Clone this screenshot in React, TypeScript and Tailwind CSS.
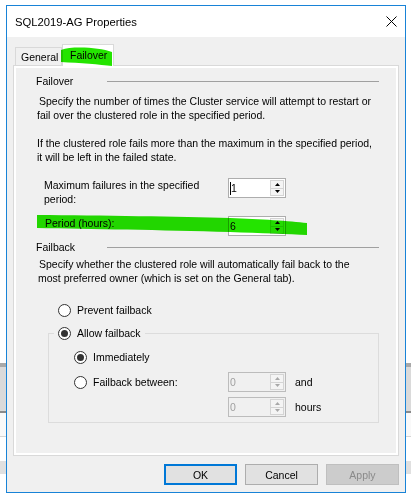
import clsx from "clsx";

function GroupHeader({ title }: { title: string }) {
    return (
        <div className="flex h-[14px] items-center">
            <span className="w-[71px]">{title}</span>
            <div className="h-px flex-1 bg-[#a0a0a0]"></div>
        </div>
    )
}

function SpinBox({ value, disabled, caret }: { value: string; disabled?: boolean; caret?: boolean }) {
    const arrow = disabled ? "#a8a8a8" : "#000";
    return (
        <div className={clsx("flex h-[20px] w-[58px] border", disabled ? "border-[#bcbcbc] bg-[#f0f0f0]" : "border-[#adadad] bg-white")}>
            <div className="flex flex-1 items-center pl-[1px]">
                {caret && <span className="h-[13px] w-px bg-black"></span>}
                <span className={disabled ? "text-[#a0a0a0]" : "text-black"}>{value}</span>
            </div>
            <div className="my-[1px] mr-[1px] flex w-[14px] flex-col border border-[#d4d4d4] bg-[#f4f4f4]">
                <div className="flex flex-1 items-center justify-center border-b border-[#d4d4d4]">
                    <svg width="5" height="3" viewBox="0 0 5 3"><path d="M2.5 0 L5 3 L0 3 Z" fill={arrow} /></svg>
                </div>
                <div className="flex flex-1 items-center justify-center">
                    <svg width="5" height="3" viewBox="0 0 5 3"><path d="M0 0 L5 0 L2.5 3 Z" fill={arrow} /></svg>
                </div>
            </div>
        </div>
    )
}

function Radio({ checked, label, className }: { checked?: boolean; label: string; className?: string }) {
    return (
        <div className={clsx("flex h-[14px] items-center", className)}>
            <span className="flex h-[13px] w-[13px] items-center justify-center rounded-full border border-[#333] bg-white">
                {checked && <span className="h-[7px] w-[7px] rounded-full bg-[#333]"></span>}
            </span>
            <span className="ml-[6px]">{label}</span>
        </div>
    )
}

export default function App() {
    return (
        <div className="relative h-[496px] w-[411px] overflow-hidden bg-[linear-gradient(to_bottom,#fff_363px,#a8a8a8_363px,#a8a8a8_367px,#dadada_367px,#dadada_411px,#8a8a8a_411px,#8a8a8a_413px,#f9f9f9_413px,#f9f9f9_436px,#d5d5d5_436px,#d5d5d5_437px,#fff_437px,#fff_461px,#e0e0e0_461px,#e0e0e0_474px,#fff_474px)] pl-[6px] pt-[5px] font-['Liberation_Sans',Arial,sans-serif] text-[10.5px] leading-[14px] text-black">
            <div className="flex h-[488px] w-[400px] flex-col border border-[#1883d7] bg-[#f0f0f0]">
                <div className="flex h-[31px] items-center justify-between bg-white pl-[8px] pr-[8px]">
                    <span className="text-[11.25px]">SQL2019-AG Properties</span>
                    <svg width="11" height="11" viewBox="0 0 11 11">
                        <path d="M0.5 0.5 L10.5 10.5 M10.5 0.5 L0.5 10.5" stroke="#000" strokeWidth="1" />
                    </svg>
                </div>

                <div className="mt-[7px] -mb-px flex items-end pl-[8px]">
                    <div className="flex h-[19px] w-[47px] items-center border border-b-0 border-[#d9d9d9] bg-[#f0f0f0] pl-[5px]">General</div>
                    <div className="relative z-10 flex h-[22px] w-[52px] items-center border border-b-0 border-[#d9d9d9] bg-white pb-[2px] pl-[7px]">Failover</div>
                </div>

                <div className="mx-[6px] h-[391px] border border-[#d9d9d9] pl-[22px] pr-[19px] pt-[8px] shadow-[inset_0_0_0_2px_#fff]">
                    <GroupHeader title="Failover" />
                    <p className="mt-[6px] pl-[1px] indent-[2px]">
                        Specify the number of times the Cluster service will attempt to restart or<br />
                        fail over the clustered role in the specified period.
                    </p>
                    <p className="mt-[14px] pl-[1px]">
                        If the clustered role fails more than the maximum in the specified period,<br />
                        it will be left in the failed state.
                    </p>

                    <div className="mt-[14px] flex items-start pl-[8px]">
                        <div className="w-[184px]">Maximum failures in the specified<br />period:</div>
                        <SpinBox value="1" caret />
                    </div>
                    <div className="mt-[10px] flex items-start pl-[8px]">
                        <div className="w-[184px] pl-[1px]">Period (hours):</div>
                        <SpinBox value="6" />
                    </div>

                    <div className="mt-[4px]">
                        <GroupHeader title="Failback" />
                    </div>
                    <p className="mt-[3px] pl-[2px] indent-[1px]">
                        Specify whether the clustered role will automatically fail back to the<br />
                        most preferred owner (which is set on the General tab).
                    </p>

                    <Radio label="Prevent failback" className="ml-[22px] mt-[18px]" />

                    <fieldset className="ml-[12px] mt-[9px] border border-[#dcdcdc] pb-[5px]">
                        <legend className="ml-[5px] px-[4px]">
                            <Radio checked label="Allow failback" />
                        </legend>
                        <div className="pl-[25px]">
                            <Radio checked label="Immediately" className="mt-[10px]" />
                            <div className="mt-[8px] flex items-center">
                                <Radio label="Failback between:" className="w-[154px]" />
                                <SpinBox value="0" disabled />
                                <span className="ml-[9px]">and</span>
                            </div>
                            <div className="mt-[5px] flex items-center pl-[154px]">
                                <SpinBox value="0" disabled />
                                <span className="ml-[9px]">hours</span>
                            </div>
                        </div>
                    </fieldset>
                </div>

                <div className="mt-[8px] flex justify-end gap-[8px] pr-[6px]">
                    <button className="flex h-[21px] w-[73px] items-center justify-center border-2 border-[#0078d7] bg-[#e1e1e1]">OK</button>
                    <button className="flex h-[21px] w-[73px] items-center justify-center border border-[#adadad] bg-[#e1e1e1]">Cancel</button>
                    <button className="flex h-[21px] w-[73px] items-center justify-center border border-[#bfbfbf] bg-[#cccccc] text-[#8a8a8a]">Apply</button>
                </div>
            </div>

            <svg className="pointer-events-none absolute inset-0 z-20 mix-blend-multiply" width="411" height="496" viewBox="0 0 411 496">
                <path d="M61 50 C66 48 72 47.5 80 47.5 C92 47.5 104 49 112 52 L112 66 C100 64.5 80 63 61 62 Z" fill="#24e400" />
                <path d="M37 215 C100 215.5 180 216.5 230 218 C260 219 290 221 307 223 L307 235 C290 234 260 233 230 232 C160 230 90 229 37 228 Z" fill="#24e400" />
            </svg>
        </div>
    )
}
